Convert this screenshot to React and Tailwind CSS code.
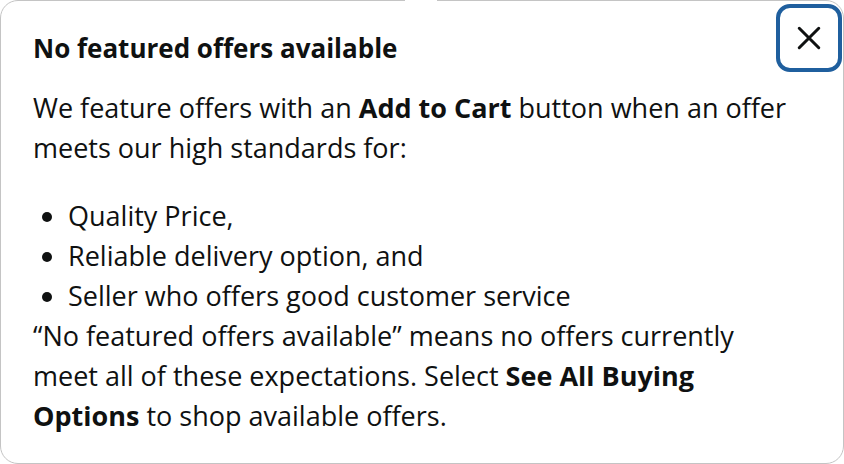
import React from 'react';

const bullets = [
    'Quality Price,',
    'Reliable delivery option, and',
    'Seller who offers good customer service',
];

const App = () => {
    return (
        <div className="w-[844px] h-[464px] bg-white overflow-hidden" style={{ fontFamily: '"Open Sans", "Noto Sans", sans-serif' }}>
            <div className="relative w-full h-full border border-[#c4c4c4] rounded-[18px] bg-white text-[#0f1111]">
                {/* notch in the top border where the arrow sits */}
                <span className="absolute -top-px left-[404px] w-[32px] h-[3px] bg-white"></span>

                <button className="absolute top-[3px] right-[1px] w-[66px] h-[68px] rounded-[14px] border-4 border-[#1f5f9e] flex items-center justify-center bg-white">
                    <svg className="w-[26px] h-[26px]" viewBox="0 0 24 24" fill="none" stroke="#0f1111" strokeWidth="2.8" strokeLinecap="round">
                        <path d="M3 3l18 18M21 3L3 21" />
                    </svg>
                </button>

                <div className="pl-8 pr-[42px] pt-[29px]">
                    <h3 className="text-[26px] font-bold leading-[36px] mb-[22px]">No featured offers available</h3>
                    <p className="text-[27px] leading-[40px]">
                        We feature offers with an <b>Add to Cart</b> button when an offer meets our high standards for:
                    </p>
                    <ul className="mt-[28px] pl-[35px] list-disc text-[27px] leading-[40px]">
                        {bullets.map((b) => (
                            <li key={b}>{b}</li>
                        ))}
                    </ul>
                    <p className="text-[27px] leading-[40px]">
                        “No featured offers available” means no offers currently meet all of these expectations. Select <b>See All Buying Options</b> to shop available offers.
                    </p>
                </div>
            </div>
        </div>
    );
};

export default App;
